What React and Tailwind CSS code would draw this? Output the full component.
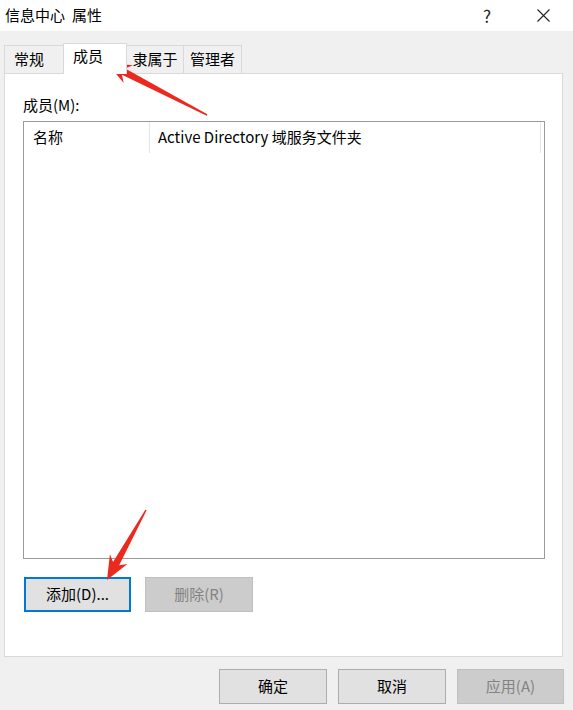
import React from 'react';

const font = { fontFamily: '"Noto Sans CJK SC", "Noto Sans", sans-serif' };

function arrowPoints(x1, y1, x2, y2, head = 24, headW = 20, shaftW = 7, tailW = 1.5) {
  const dx = x2 - x1;
  const dy = y2 - y1;
  const len = Math.hypot(dx, dy);
  const ux = dx / len;
  const uy = dy / len;
  const nx = -uy;
  const ny = ux;
  const bx = x2 - ux * head;
  const by = y2 - uy * head;
  const kx = x2 - ux * head * 0.78;
  const ky = y2 - uy * head * 0.78;
  const pts = [
    [x1 + (nx * tailW) / 2, y1 + (ny * tailW) / 2],
    [kx + (nx * shaftW) / 2, ky + (ny * shaftW) / 2],
    [bx + (nx * headW) / 2, by + (ny * headW) / 2],
    [x2, y2],
    [bx - (nx * headW) / 2, by - (ny * headW) / 2],
    [kx - (nx * shaftW) / 2, ky - (ny * shaftW) / 2],
    [x1 - (nx * tailW) / 2, y1 - (ny * tailW) / 2],
  ];
  return pts.map((p) => p.join(',')).join(' ');
}

function Button({ children, primary, disabled, className = '' }) {
  let cls = 'border-[#adadad] bg-[#e1e1e1] text-black';
  if (primary) cls = 'border-2 border-[#0078d7] bg-[#e1e1e1] text-black';
  if (disabled) cls = 'border-[#bfbfbf] bg-[#cccccc] text-[#838383]';
  return (
    <div className={`flex h-[35px] items-center justify-center border text-[15px] ${cls} ${className}`}>
      {children}
    </div>
  );
}

export default function App() {
  return (
    <div className="relative flex h-[710px] w-[573px] flex-col overflow-hidden bg-[#f0f0f0]" style={font}>
      {/* title bar */}
      <div className="flex h-[31px] items-center bg-white pl-[5px] text-[15px] text-black">
        <span>信息中心</span>
        <span className="ml-[7px]">属性</span>
        <span className="ml-auto mr-[46px] text-[17px] text-[#222]">?</span>
        <svg width="13" height="13" viewBox="0 0 13 13" className="mr-[23px]">
          <path d="M0.5 0.5 L12.5 12.5 M12.5 0.5 L0.5 12.5" stroke="#222" strokeWidth="1.1" />
        </svg>
      </div>

      {/* tabs */}
      <div className="mt-[12px] flex items-end pl-[4px]">
        <div className="flex h-[28px] w-[59px] items-center border border-b-0 border-r-0 border-[#d9d9d9] pl-[9px] text-[15px] text-black">常规</div>
        <div className="relative z-10 -mb-px flex h-[31px] w-[64px] items-start border border-b-0 border-[#d9d9d9] bg-white pl-[9px] pt-[1px] text-[15px] text-black">成员</div>
        <div className="flex h-[28px] w-[57px] items-center justify-center border border-b-0 border-l-0 border-[#d9d9d9] text-[15px] text-black">隶属于</div>
        <div className="flex h-[28px] w-[58px] items-center justify-center border border-b-0 border-l-0 border-[#d9d9d9] text-[15px] text-black">管理者</div>
      </div>

      {/* panel */}
      <div className="ml-[4px] flex h-[584px] w-[559px] flex-col border border-[#d9d9d9] bg-white px-[18px] pt-[21px]">
        <div className="h-[26px] text-[15px] leading-[20px] text-black">成员(M):</div>
        <div className="flex h-[438px] w-[522px] flex-col border border-[#9a9a9a] bg-white">
          <div className="flex h-[31px] items-center text-[15px] text-black">
            <div className="flex h-full w-[126px] items-center border-r border-[#e5e5e5] pl-[9px]">名称</div>
            <div className="flex h-full w-[391px] items-center border-r border-[#e5e5e5] pl-[8px]">Active Directory 域服务文件夹</div>
          </div>
        </div>
        <div className="mt-[18px] flex gap-[14px] pl-[1px]">
          <Button primary className="w-[107px]">添加(D)...</Button>
          <Button disabled className="w-[108px]">删除(R)</Button>
        </div>
      </div>

      {/* dialog buttons */}
      <div className="mt-[12px] flex justify-end gap-[11px] pr-[9px]">
        <Button className="w-[108px]">确定</Button>
        <Button className="w-[108px]">取消</Button>
        <Button disabled className="w-[107px]">应用(A)</Button>
      </div>

      {/* annotation arrows */}
      <svg className="pointer-events-none absolute left-0 top-0" width="573" height="710">
        <polygon points={arrowPoints(207, 115, 107, 63)} fill="#ea2a1f" />
        <polygon points={arrowPoints(146, 510, 107, 580)} fill="#ea2a1f" />
      </svg>
    </div>
  );
}
